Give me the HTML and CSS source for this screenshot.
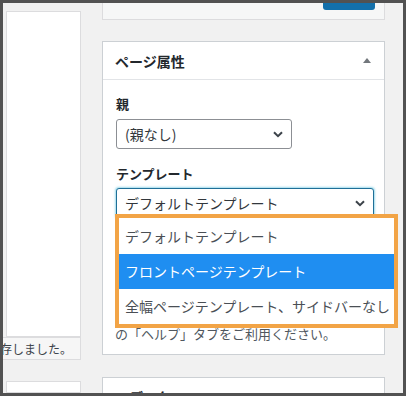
FILE: index.html
```html
<!DOCTYPE html>
<html lang="ja">
<head>
<meta charset="utf-8">
<title>ページ属性</title>
<link rel="stylesheet" href="styles.css">
</head>
<body>
<div class="screen">
  <div class="main">
    <div class="editor"></div>
    <div class="notice"><span>下書きを保存しました。</span></div>
    <div class="editor editor-low"></div>
  </div>
  <div class="side">
    <div class="topbox"><div class="publish"></div></div>
    <div class="postbox">
      <div class="postbox-header">
        <h2 class="title">ページ属性</h2>
        <span class="toggle"></span>
      </div>
      <div class="inside">
        <div class="label">親</div>
        <div class="select select-parent">
          <span>(親なし)</span>
          <svg class="chev" width="10" height="7" viewBox="0 0 10 7"><path d="M1 1.2 L5 5.2 L9 1.2" fill="none" stroke="#3c434a" stroke-width="2"/></svg>
        </div>
        <div class="label label-gap">テンプレート</div>
        <div class="select select-template">
          <span>デフォルトテンプレート</span>
          <svg class="chev" width="10" height="7" viewBox="0 0 10 7"><path d="M1 1.2 L5 5.2 L9 1.2" fill="none" stroke="#3c434a" stroke-width="2"/></svg>
        </div>
        <p class="help">の「ヘルプ」タブをご利用ください。</p>
      </div>
      <ul class="dropdown">
        <li class="opt opt-first">デフォルトテンプレート</li>
        <li class="opt opt-sel">フロントページテンプレート</li>
        <li class="opt">全幅ページテンプレート、サイドバーなし</li>
      </ul>
    </div>
    <div class="postbox postbox-next">
      <div class="postbox-header">
        <h2 class="title">エディタ</h2>
      </div>
    </div>
  </div>
  <div class="rail"></div>
</div>
</body>
</html>
```

FILE: styles.css
```css
html, body {
  margin: 0;
  padding: 0;
}
body {
  width: 406px;
  height: 396px;
  overflow: hidden;
  background: #525252;
  font-family: "Noto Sans CJK JP", "Noto Sans", sans-serif;
  color: #1d2327;
}
.screen {
  margin: 3px;
  width: 400px;
  height: 390px;
  background: #f1f1f1;
  display: flex;
  overflow: hidden;
}
.main {
  width: 78px;
  flex-shrink: 0;
  display: flex;
  flex-direction: column;
}
.editor {
  margin-top: 8px;
  margin-left: 3px;
  height: 324px;
  background: #fff;
  border: 1px solid #dcdcde;
  flex-shrink: 0;
}
.editor-low {
  margin-top: 21px;
  height: auto;
  flex: 1;
}
.notice {
  height: 21px;
  background: #f6f6f6;
  border: 1px solid #dcdcde;
  border-left: none;
  display: flex;
  justify-content: flex-end;
  overflow: hidden;
  white-space: nowrap;
  font-size: 12px;
  line-height: 21px;
  color: #3c434a;
  padding-right: 8px;
}
.side {
  width: 283px;
  margin-left: 21px;
  flex-shrink: 0;
}
.topbox {
  height: 16px;
  background: #f6f7f7;
  border: 1px solid #dcdcde;
  border-top: none;
  display: flex;
  justify-content: flex-end;
  padding-right: 9px;
}
.publish {
  width: 52px;
  height: 7px;
  background: #1370ab;
  border-radius: 0 0 3px 3px;
}
.postbox {
  margin-top: 21px;
  background: #fff;
  border: 1px solid #ccd0d4;
  position: relative;
}
.postbox-next {
  margin-top: 22px;
}
.postbox-header {
  height: 37px;
  border-bottom: 1px solid #e2e4e7;
  display: flex;
  align-items: center;
  justify-content: space-between;
  padding: 0 13px 0 12px;
}
.title {
  margin: 0;
  font-size: 14px;
  font-weight: 700;
  line-height: 20px;
  color: #23282d;
}
.toggle {
  width: 0;
  height: 0;
  border-left: 4px solid transparent;
  border-right: 4px solid transparent;
  border-bottom: 5px solid #72777c;
  margin-top: -1px;
}
.inside {
  padding: 14px 12px 11px 13px;
}
.label {
  font-size: 13px;
  line-height: 20px;
  font-weight: 700;
  color: #23282d;
}
.label-gap {
  margin-top: 15px;
}
.select {
  margin-top: 5px;
  height: 30px;
  box-sizing: border-box;
  border: 1px solid #8c8f94;
  border-radius: 3px;
  display: flex;
  align-items: center;
  justify-content: space-between;
  padding: 0 8px 0 8px;
  font-size: 14px;
  color: #32373c;
  background: #fff;
}
.select-parent {
  width: 176px;
}
.select-template {
  margin-top: 4px;
  width: 258px;
  border-color: #1f6f97;
  box-shadow: 0 0 2px 1px rgba(80, 190, 220, 0.55);
}
.chev {
  display: block;
}
.help {
  margin: 106px 0 0 -1px;
  font-size: 13px;
  line-height: 19px;
  color: #50575e;
  white-space: nowrap;
}
.dropdown {
  position: absolute;
  left: 12px;
  top: 172px;
  width: 283px;
  box-sizing: border-box;
  margin: 0;
  padding: 0;
  list-style: none;
  border: 4px solid #f2a446;
  background: #fff;
}
.opt {
  height: 35px;
  line-height: 35px;
  padding-left: 6px;
  font-size: 14px;
  color: #4a4f55;
  white-space: nowrap;
}
.opt-first {
  height: 36px;
  line-height: 36px;
}
.opt-sel {
  background: #1f8ef1;
  color: #fff;
}
.rail {
  flex: 1;
}
```
